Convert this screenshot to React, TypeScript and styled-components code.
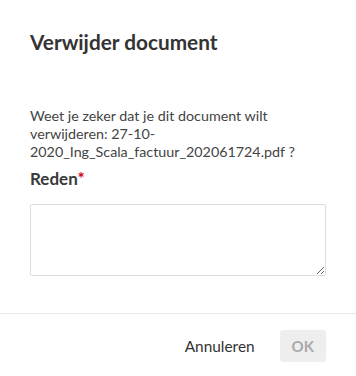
import React from "react";
import styled, { createGlobalStyle } from "styled-components";

const Global = createGlobalStyle`
  html, body { margin: 0; padding: 0; background: #fff; }
  body { font-family: Lato, "Open Sans", sans-serif; color: #333; }
  * { box-sizing: border-box; }
`;

const Dialog = styled.div`
  width: 356px;
  height: 376px;
  display: flex;
  flex-direction: column;
  background: #fff;
`;

const Header = styled.div`
  padding: 28px 30px 0;
`;

const Title = styled.h2`
  margin: 0;
  font-size: 20.8px;
  line-height: 28px;
  font-weight: 700;
  color: #333;
`;

const Body = styled.div`
  padding: 51px 30px 0;
  display: flex;
  flex-direction: column;
  flex: 1;
`;

const Message = styled.p`
  margin: 0;
  font-size: 14.3px;
  line-height: 18px;
  color: #444;
`;

const Label = styled.label`
  margin-top: 7px;
  font-size: 17px;
  line-height: 22px;
  font-weight: 700;
  color: #3a3a3a;
`;

const Required = styled.span`
  color: #d0021b;
`;

const TextArea = styled.textarea`
  margin-top: 14px;
  width: 296px;
  height: 72px;
  border: 1px solid #dcdcdc;
  border-radius: 2px;
  font: inherit;
  outline: none;
`;

const Footer = styled.div`
  border-top: 1px solid #e8e8e8;
  padding: 16px 30px 14px;
  display: flex;
  justify-content: flex-end;
  align-items: center;
  gap: 25px;
`;

const Button = styled.button<{ $variant?: "link" | "disabled" }>`
  font-family: inherit;
  font-size: ${(p) => (p.$variant === "disabled" ? "15px" : "15.4px")};
  height: 32px;
  border: none;
  border-radius: 3px;
  cursor: pointer;
  padding: ${(p) => (p.$variant === "disabled" ? "0 12px" : "0")};
  background: ${(p) => (p.$variant === "disabled" ? "#eeeeee" : "transparent")};
  color: ${(p) => (p.$variant === "disabled" ? "#aaaaaa" : "#333")};
  font-weight: ${(p) => (p.$variant === "disabled" ? 700 : 400)};
  min-width: ${(p) => (p.$variant === "disabled" ? "46px" : "auto")};
`;

export default function App() {
  return (
    <>
      <Global />
      <Dialog>
        <Header>
          <Title>Verwijder document</Title>
        </Header>
        <Body>
          <Message>
            Weet je zeker dat je dit document wilt verwijderen: 27-10-2020_Ing_Scala_factuur_202061724.pdf ?
          </Message>
          <Label>
            Reden<Required>*</Required>
          </Label>
          <TextArea />
        </Body>
        <Footer>
          <Button $variant="link">Annuleren</Button>
          <Button $variant="disabled" disabled>OK</Button>
        </Footer>
      </Dialog>
    </>
  );
}
